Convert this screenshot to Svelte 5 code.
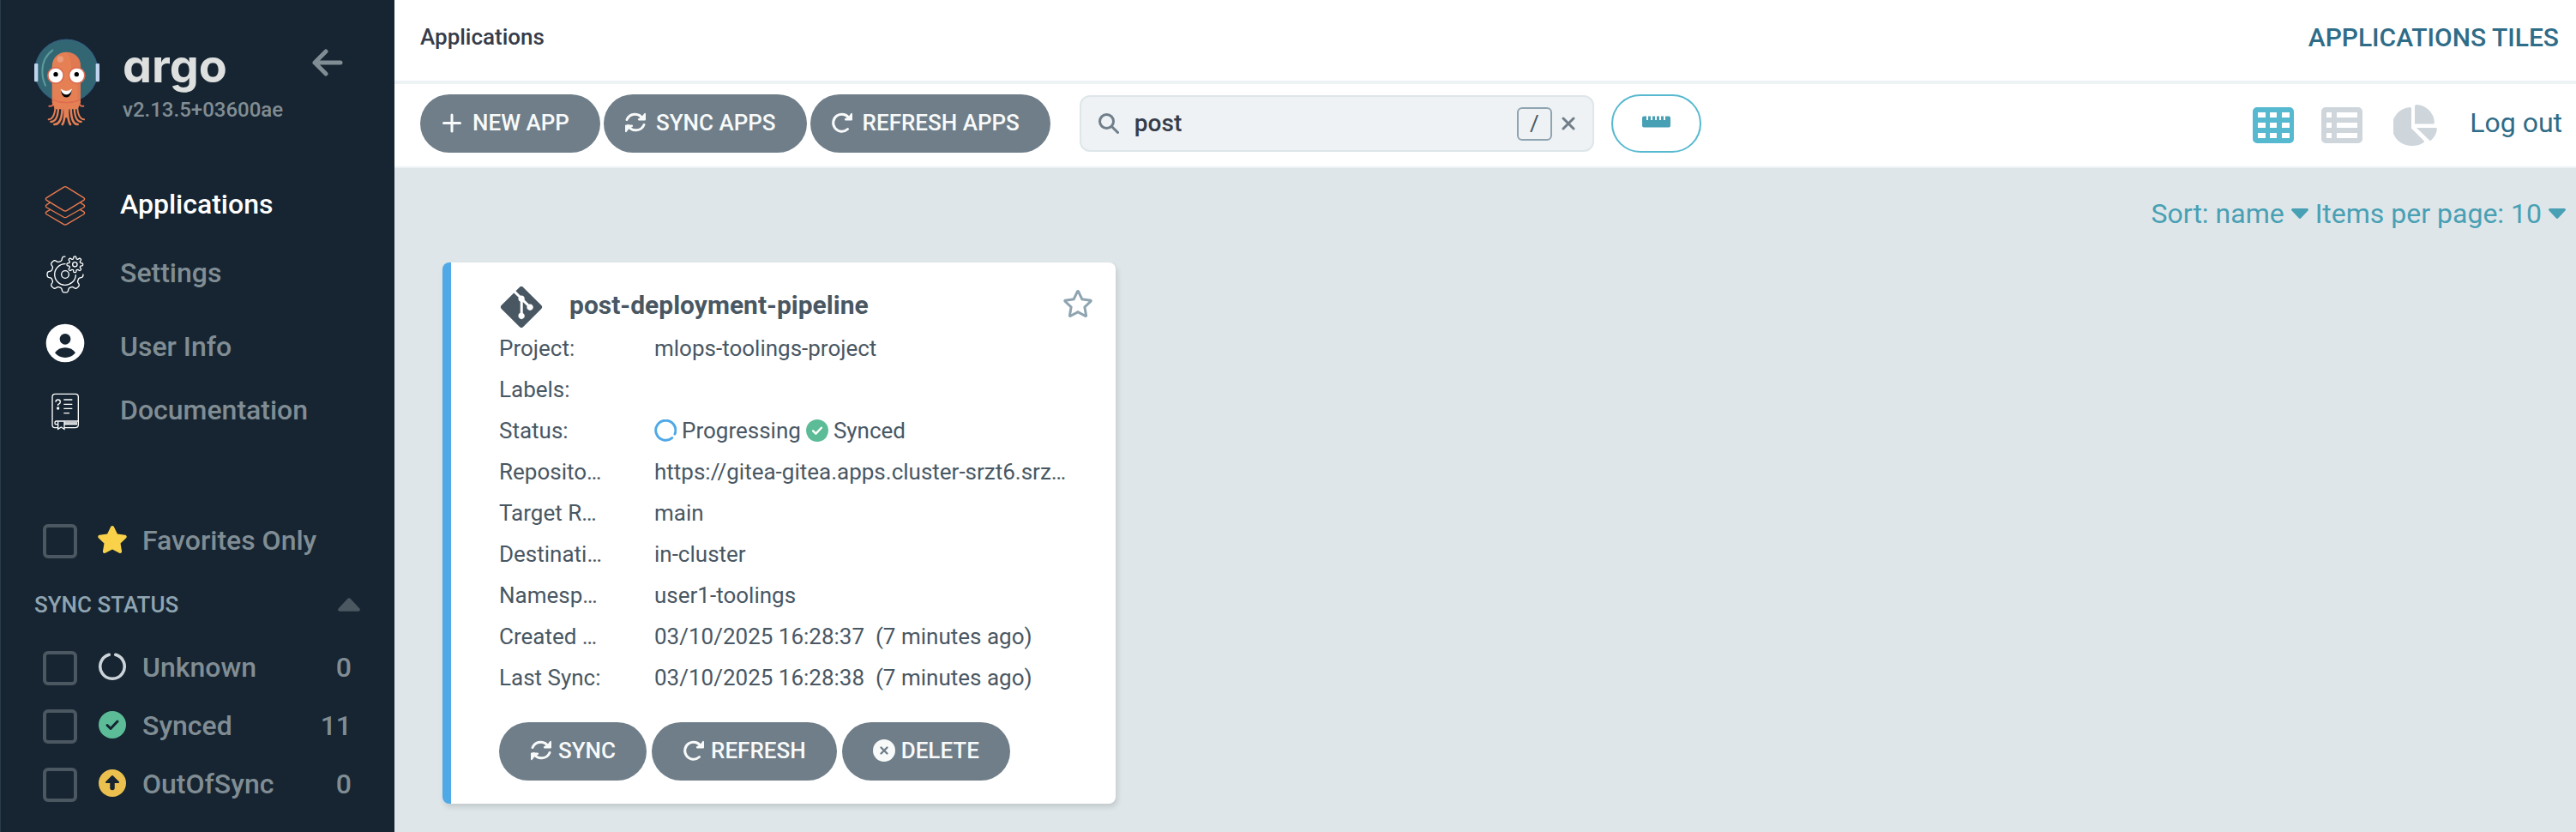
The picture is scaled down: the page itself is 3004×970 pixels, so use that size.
<script>
  const nav = [
    { label: 'Applications', icon: 'stack', active: true },
    { label: 'Settings', icon: 'gear' },
    { label: 'User Info', icon: 'user' },
    { label: 'Documentation', icon: 'book' }
  ];

  const statuses = [
    { label: 'Unknown', icon: 'notch', count: 0 },
    { label: 'Synced', icon: 'check', count: 11 },
    { label: 'OutOfSync', icon: 'up', count: 0 }
  ];

  const details = [
    { label: 'Project:', value: 'mlops-toolings-project' },
    { label: 'Labels:', value: '' },
    { label: 'Status:', status: true },
    { label: 'Reposito…', value: 'https://gitea-gitea.apps.cluster-srzt6.srz…' },
    { label: 'Target R…', value: 'main' },
    { label: 'Destinati…', value: 'in-cluster' },
    { label: 'Namesp…', value: 'user1-toolings' },
    { label: 'Created …', value: '03/10/2025 16:28:37 \u00a0(7 minutes ago)' },
    { label: 'Last Sync:', value: '03/10/2025 16:28:38 \u00a0(7 minutes ago)' }
  ];

  let search = $state('post');

  // Eight-toothed gear outline between two angles, in degrees clockwise from the right.
  function gear(cx, cy, mid, depth, from, to) {
    const points = [];
    for (let a = from; a <= to; a += 2) {
      const t = (a * Math.PI) / 180;
      const r = mid + depth * Math.tanh(2.2 * Math.cos(8 * t));
      points.push(`${(cx + r * Math.cos(t)).toFixed(1)} ${(cy + r * Math.sin(t)).toFixed(1)}`);
    }
    return 'M' + points.join('L');
  }
  const bigGear = gear(228, 390, 56, 7, 0, 270);
  const smallGear = gear(262, 355, 24, 4, 0, 360) + 'Z';
</script>

{#snippet syncIcon()}
  <svg class="btn-icon" viewBox="0 0 26 26" aria-hidden="true">
    <g fill="none" stroke="currentColor" stroke-width="3" stroke-linecap="round" stroke-linejoin="round">
      <path d="M3 9.5A10.3 10.3 0 0 1 21.5 8.5" />
      <path d="M23 15.5A10.3 10.3 0 0 1 4.500 16.5" />
    </g>
    <path d="M23.500 2a1 1 0 0 1 1.500 1v6.500a1 1 0 0 1-1 1h-7a1.300 1.300 0 0 1-.6-2.300l3.800-2z" fill="currentColor" />
    <path d="M2.500 24a1 1 0 0 1-1.500-1v-6.500a1 1 0 0 1 1-1h7a1.300 1.300 0 0 1 .6 2.300l-3.800 2z" fill="currentColor" />
  </svg>
{/snippet}

{#snippet refreshIcon()}
  <svg class="btn-icon" viewBox="0 0 26 26" aria-hidden="true">
    <path d="M19.500 20.500A10 10 0 1 1 21.500 8.500" fill="none" stroke="currentColor" stroke-width="3" stroke-linecap="round" />
    <path d="M23.500 2a1 1 0 0 1 1.500 1v6.500a1 1 0 0 1-1 1h-7a1.300 1.300 0 0 1-.6-2.300l4-2z" fill="currentColor" />
  </svg>
{/snippet}

{#snippet caret(up)}
  <svg class="caret" viewBox="0 0 20 12" aria-hidden="true">
    <path
      d={up
        ? 'M1.500 12h17a1.500 1.500 0 0 0 1-2.500l-8-8.600a2 2 0 0 0-3 0l-8 8.600a1.500 1.500 0 0 0 1 2.500z'
        : 'M1.500 0h17a1.500 1.500 0 0 1 1 2.500l-8 8.600a2 2 0 0 1-3 0l-8-8.600a1.500 1.500 0 0 1 1-2.500z'}
      fill="currentColor"
    />
  </svg>
{/snippet}

{#snippet checkBadge(mark)}
  <svg class="badge" viewBox="0 0 32 32" aria-hidden="true">
    <circle cx="16" cy="16" r="16" fill="#5bbc97" />
    <path d="M10 16.500l4 4 8-8.500" fill="none" stroke={mark} stroke-width="3" stroke-linecap="round" stroke-linejoin="round" />
  </svg>
{/snippet}

<div class="app">
  <aside class="sidebar">
    <div class="brand">
      <svg class="mascot" viewBox="57 45 234 306" role="img" aria-label="Argo">
        <circle cx="172" cy="158" r="110" fill="#336673" stroke="#33608a" stroke-width="3" />
        <path d="M124 86Q88 112 88 160Q88 186 99 209" fill="none" stroke="#64a3a3" stroke-width="6" stroke-linecap="round" opacity=".85" />
        <rect x="60" y="132" width="13" height="64" rx="4" fill="#bfd3ee" />
        <rect x="275" y="132" width="13" height="64" rx="4" fill="#bfd3ee" />
        <g fill="none" stroke="#e57f54" stroke-width="9" stroke-linecap="round">
          <path d="M128 266Q126 284 112 281" stroke="#dd6b50" stroke-width="6" />
          <path d="M216 266Q218 284 232 281" stroke="#dd6b50" stroke-width="6" />
          <path d="M134 270Q134 326 110 328" stroke-width="6" />
          <path d="M144 272Q146 334 118 336" stroke-width="7" />
          <path d="M158 272Q160 344 130 345" stroke-width="8" />
          <path d="M168 270Q168 334 158 345" stroke-width="8" />
          <path d="M176 270Q176 334 186 345" stroke-width="8" />
          <path d="M188 272Q186 344 212 345" stroke-width="8" />
          <path d="M200 272Q198 334 224 336" stroke-width="7" />
          <path d="M210 270Q210 326 234 328" stroke-width="6" />
        </g>
        <path d="M122 143C122 75 222 75 222 143V268L212 292H132L122 268Z" fill="#e57f54" />
        <path d="M162 285H182L178 322H166Z" fill="#e57f54" />
        <path d="M174 93C206 95 222 112 222 143V262L212 266V190Q192 190 190 150Q190 110 174 93Z" fill="#dd7550" opacity=".75" />
        <path d="M122 259Q172 279 222 259" fill="none" stroke="#dd6b50" stroke-width="4" />
        <circle cx="151" cy="117" r="11" fill="#eb9c7c" />
        <circle cx="135" cy="174" r="30" fill="#dd6b50" />
        <circle cx="209" cy="174" r="30" fill="#dd6b50" />
        <circle cx="135" cy="174" r="25" fill="#fff" />
        <circle cx="209" cy="174" r="25" fill="#fff" />
        <circle cx="135" cy="170" r="8" fill="#000" />
        <circle cx="208" cy="170" r="8" fill="#000" />
        <path d="M153 222C154 260 190 260 191 222Q172 244 153 222Z" fill="#000" />
        <path d="M153 222Q158 240 172 240T191 222Q172 236 153 222Z" fill="#fff" stroke="#fff" stroke-width="2" />
      </svg>
      <div class="brand-text">
        <span class="wordmark">argo</span>
        <span class="version">v2.13.5+03600ae</span>
      </div>
      <button class="collapse" aria-label="Collapse sidebar">
        <svg viewBox="0 0 36 32" aria-hidden="true">
          <path d="M33 16H3M16 3L3 16l13 13" fill="none" stroke="currentColor" stroke-width="5" stroke-linecap="round" stroke-linejoin="round" />
        </svg>
      </button>
    </div>

    <nav>
      {#each nav as item}
        <a href="#{item.icon}" class="nav-link {item.icon}" class:active={item.active}>
          {#if item.icon === 'stack'}
            <svg viewBox="156 78 144 144" fill="none" stroke="#ee7a4d" stroke-width="4" stroke-linejoin="round" aria-hidden="true">
              <path d="M222 85Q228 81 234 85L292 121Q300 126 292 131L234 166Q228 170 222 166L164 131Q156 126 164 121Z" />
              <path d="M176 138L164 146Q156 151 164 156L222 189Q228 193 234 189L292 156Q300 151 292 146L280 138" />
              <path d="M176 163L164 170Q156 175 164 180L222 214Q228 218 234 214L292 180Q300 175 292 170L280 163" />
            </svg>
          {:else if item.icon === 'gear'}
            <svg viewBox="156 318 144 144" fill="none" stroke="#fff" stroke-width="4" stroke-linecap="round" stroke-linejoin="round" aria-hidden="true">
              <path d={bigGear} />
              <path d="M228 353A37 37 0 1 0 265 392" />
              <circle cx="228" cy="390" r="13" />
              <path d={smallGear} />
              <circle cx="262" cy="355" r="8" />
            </svg>
          {:else if item.icon === 'user'}
            <svg viewBox="156 553 144 144" aria-hidden="true">
              <circle cx="228" cy="625" r="67" fill="#fff" />
              <circle cx="228" cy="611" r="19" fill="#162531" />
              <path d="M192 659Q204 641 228 641T264 659Q250 676 228 676T192 659Z" fill="#162531" />
            </svg>
          {:else}
            <svg viewBox="159 798 144 144" fill="none" stroke="#fff" stroke-width="4" aria-hidden="true">
              <path d="M206 926H195Q186 926 186 916V818Q186 808 196 808H267Q277 808 277 818V903H200Q195 903 195 909T200 914H206M228 926H266Q277 926 277 916V900M228 914H273M228 909H273" />
              <path d="M206 904V931L217 924L228 931V904" />
              <path d="M226 828H256M226 844H256M226 859H256M226 875H246" />
              <path d="M198 836Q198 828 206 828T214 836Q214 841 206 845V849" />
              <circle cx="206" cy="858" r="3" fill="#fff" />
            </svg>
          {/if}
          <span>{item.label}</span>
        </a>
      {/each}
    </nav>

    <div class="filters">
      <label class="filter">
        <input type="checkbox" />
        <svg class="badge" viewBox="18 0 540 512" aria-hidden="true">
          <path d="M259.300 17.800L194 150.200 47.900 171.500c-26.200 3.800-36.700 36.100-17.700 54.600l105.700 103-25 145.500c-4.500 26.300 23.200 46 46.400 33.700L288 439.600l130.700 68.700c23.200 12.200 50.900-7.400 46.400-33.700l-25-145.500 105.700-103c19-18.500 8.500-50.800-17.700-54.600L382 150.200 316.700 17.800c-11.700-23.600-45.600-23.900-57.400 0z" fill="#f9d24a" />
        </svg>
        <span class="filter-name">Favorites Only</span>
      </label>

      <button class="group-title">SYNC STATUS {@render caret(true)}</button>

      {#each statuses as s}
        <label class="filter">
          <input type="checkbox" />
          {#if s.icon === 'notch'}
            <svg class="badge" viewBox="0 0 32 32" aria-hidden="true">
              <path d="M12.200 2.300A14.200 14.200 0 1 0 19.800 2.300" fill="none" stroke="#ccd4da" stroke-width="3.600" stroke-linecap="round" />
            </svg>
          {:else if s.icon === 'check'}
            {@render checkBadge('#162531')}
          {:else}
            <svg class="badge" viewBox="0 0 32 32" aria-hidden="true">
              <circle cx="16" cy="16" r="16" fill="#ecc04e" />
              <path d="M16 8l7 7H9z" fill="#162531" stroke="#162531" stroke-width="2" stroke-linejoin="round" />
              <path d="M16 13v8.500" stroke="#162531" stroke-width="5.500" stroke-linecap="round" />
            </svg>
          {/if}
          <span class="filter-name">{s.label}</span>
          <span class="count">{s.count}</span>
        </label>
      {/each}
    </div>
  </aside>

  <main>
    <header class="topbar">
      <span class="crumb">Applications</span>
      <span class="view-title">APPLICATIONS TILES</span>
    </header>

    <div class="toolbar">
      <div class="actions">
        <button class="btn">
          <svg class="btn-icon" viewBox="0 0 26 26" aria-hidden="true">
            <path d="M13 4v19M3.500 13.500h19" stroke="currentColor" stroke-width="3" stroke-linecap="round" />
          </svg>
          NEW APP
        </button>
        <button class="btn">{@render syncIcon()} SYNC APPS</button>
        <button class="btn">{@render refreshIcon()} REFRESH APPS</button>
      </div>

      <div class="search">
        <svg class="magnifier" viewBox="0 0 24 24" aria-hidden="true">
          <circle cx="9.500" cy="9.500" r="8" fill="none" stroke="currentColor" stroke-width="3" />
          <path d="M15.500 15.500l7 7" stroke="currentColor" stroke-width="3" stroke-linecap="round" />
        </svg>
        <input type="text" aria-label="Search applications" bind:value={search} />
        <kbd>/</kbd>
        <button class="clear" aria-label="Clear search" onclick={() => (search = '')}>
          <svg viewBox="0 0 16 16" aria-hidden="true">
            <path d="M2 2l12 12M14 2L2 14" stroke="currentColor" stroke-width="3" stroke-linecap="round" />
          </svg>
        </button>
      </div>

      <button class="ruler" aria-label="Health status bar">
        <svg viewBox="0 0 33 14" aria-hidden="true">
          <path d="M2 0.500h3v4.500h2V0.500h3v4.500h2V0.500h3v4.500h2V0.500h3v4.500h2V0.500h3v4.500h2V0.500h4q2 0 2 2v9q0 2-2 2H2q-2 0-2-2V2.500q0-2 2-2z" fill="currentColor" />
        </svg>
      </button>

      <div class="views">
        <button class="view on" aria-label="Tiles">
          <svg viewBox="0 0 48 42" width="48" height="42" aria-hidden="true">
            <path fill-rule="evenodd" fill="currentColor" d="M5 0h38a5 5 0 0 1 5 5v32a5 5 0 0 1-5 5H5a5 5 0 0 1-5-5V5a5 5 0 0 1 5-5zM6 6v6h9V6zM20 6v6h8V6zM34 6v6h9V6zM6 18v6h9v-6zM20 18v6h8v-6zM34 18v6h9v-6zM6 30v6h9v-6zM20 30v6h8v-6zM34 30v6h9v-6z" />
          </svg>
        </button>
        <button class="view" aria-label="List">
          <svg viewBox="0 0 48 42" width="48" height="42" aria-hidden="true">
            <path fill-rule="evenodd" fill="currentColor" d="M5 0h38a5 5 0 0 1 5 5v32a5 5 0 0 1-5 5H5a5 5 0 0 1-5-5V5a5 5 0 0 1 5-5zM6 6v6h6V6zM18 6v6h24V6zM6 18v6h6v-6zM18 18v6h24v-6zM6 30v6h6v-6zM18 30v6h24v-6z" />
          </svg>
        </button>
        <button class="view" aria-label="Summary">
          <svg viewBox="0 0 51 48" width="51" height="48" aria-hidden="true">
            <path fill="currentColor" d="M21 4.500Q21 3 19.500 3A22.500 22.500 0 0 0 22.500 48Q30 48 35.500 44Q36.500 43 35.500 42L21 27.500zM25 1.500Q25 0 27 0A22 22 0 0 1 48 20.500Q48 22.500 46.500 22.500H25zM27 27h22.500Q51 27 51 28.500Q50 36 44 41.500Q43 42.500 42 41.500z" />
          </svg>
        </button>
        <a class="logout" href="#logout">Log out</a>
      </div>
    </div>

    <section class="content">
      <div class="paging">
        <button>Sort: name {@render caret(false)}</button>
        <button>Items per page: 10 {@render caret(false)}</button>
      </div>

      <div class="tiles">
        <article class="tile">
          <div class="tile-head">
            <svg class="git" viewBox="0 32 448 448" aria-hidden="true">
              <path fill="currentColor" d="M439.550 236.050L244 40.450a28.870 28.870 0 0 0-40.810 0l-40.660 40.630 51.520 51.520c27.060-9.140 52.680 16.770 43.390 43.680l49.660 49.660c34.230-11.800 61.180 31 35.470 56.690-26.490 26.490-70.210-2.870-56-37.340L240.220 199v121.850c25.300 12.540 22.260 41.850 9.080 55a34.340 34.340 0 0 1-48.550 0c-17.570-17.600-11.070-46.910 11.250-56v-123c-20.800-8.510-24.600-30.740-18.640-45L142.570 101 8.450 235.140a28.860 28.860 0 0 0 0 40.810l195.610 195.600a28.860 28.860 0 0 0 40.800 0l194.690-194.690a28.860 28.860 0 0 0 0-40.810z" />
            </svg>
            <h2>post-deployment-pipeline</h2>
            <button class="star" aria-label="Add to favorites">
              <svg viewBox="18 0 540 512" aria-hidden="true">
                <path fill="currentColor" d="M528.100 171.500L382 150.200 316.700 17.800c-11.700-23.600-45.600-23.900-57.400 0L194 150.200 47.900 171.500c-26.200 3.800-36.700 36.100-17.700 54.600l105.700 103-25 145.500c-4.500 26.300 23.200 46 46.400 33.700L288 439.600l130.700 68.700c23.200 12.200 50.900-7.400 46.400-33.700l-25-145.500 105.700-103c19-18.500 8.500-50.800-17.700-54.600zM388.600 312.300l23.700 138.400L288 385.400l-124.300 65.300 23.700-138.400-100.600-98 139-20.200 62.200-126 62.200 126 139 20.200-100.600 98z" />
              </svg>
            </button>
          </div>

          <dl>
            {#each details as d}
              <div class="detail">
                <dt>{d.label}</dt>
                <dd>
                  {#if d.status}
                    <span class="status">
                      <svg class="badge" viewBox="0 0 32 32" aria-hidden="true">
                        <path d="M25.500 26.500A14.200 14.200 0 1 1 29.500 21" fill="none" stroke="#4fa9e6" stroke-width="3.600" stroke-linecap="round" />
                      </svg>
                      Progressing
                      {@render checkBadge('#fff')}
                      Synced
                    </span>
                  {:else}
                    {d.value}
                  {/if}
                </dd>
              </div>
            {/each}
          </dl>

          <div class="tile-actions">
            <button class="btn">{@render syncIcon()} SYNC</button>
            <button class="btn">{@render refreshIcon()} REFRESH</button>
            <button class="btn">
              <svg class="btn-icon" viewBox="0 0 26 26" aria-hidden="true">
                <circle cx="13" cy="13" r="13" fill="currentColor" />
                <path d="M9.500 9.500l7 7M16.500 9.500l-7 7" stroke="#6f7e89" stroke-width="2.400" stroke-linecap="round" />
              </svg>
              DELETE
            </button>
          </div>
        </article>
      </div>
    </section>
  </main>
</div>

<style>
  :global(body) {
    margin: 0;
    font-family: Roboto, sans-serif;
    background: #dee6e9;
  }

  .app {
    display: flex;
    min-height: 100vh;
  }

  button {
    border: 0;
    padding: 0;
    background: none;
    font: inherit;
    color: inherit;
    cursor: pointer;
  }

  a {
    text-decoration: none;
  }

  svg {
    display: block;
    flex: none;
  }

  /* Sidebar */
  .sidebar {
    box-sizing: border-box;
    flex: 0 0 460px;
    border-left: 1px solid #2c3b48;
    background: #162531;
    color: #818d94;
    font-size: 32px;
    font-weight: 500;
  }

  .brand {
    display: flex;
    align-items: flex-start;
    padding: 45px 60px 53px 38px;
  }

  .mascot {
    width: 78px;
    height: 102px;
  }

  .brand-text {
    display: flex;
    flex-direction: column;
    flex: 1;
    padding-left: 26px;
  }

  .wordmark {
    font-family: Inter, sans-serif;
    font-feature-settings: 'cv11';
    font-size: 54px;
    font-weight: 700;
    line-height: 64px;
    color: #dee0e0;
  }

  .version {
    font-size: 24px;
    line-height: 38px;
  }

  .collapse {
    padding-top: 12px;
  }

  .collapse svg {
    width: 36px;
    height: 32px;
  }

  .nav-link {
    display: flex;
    align-items: center;
    gap: 40px;
    height: 80px;
    padding-left: 51px;
    color: inherit;
  }

  .nav-link svg {
    width: 48px;
    height: 48px;
  }

  .nav-link span {
    padding-bottom: 4px;
  }

  .nav-link.active {
    color: #fff;
  }

  .nav-link.user span {
    padding: 8px 0 0;
  }

  .filters {
    padding: 77px 50px 20px 49px;
  }

  .filter {
    display: flex;
    align-items: center;
    height: 68px;
  }

  .filter input {
    appearance: none;
    box-sizing: border-box;
    width: 40px;
    height: 40px;
    margin: 0 24px 0 0;
    border: 4px solid #4b5761;
    border-radius: 6px;
  }

  .filter .badge {
    width: 34px;
    height: 32px;
  }

  .filter :global(.badge) {
    margin-bottom: 4px;
  }

  .filter-name {
    flex: 1;
    padding: 0 0 2px 18px;
  }

  .count {
    padding-bottom: 2px;
  }

  .group-title {
    display: flex;
    align-items: center;
    justify-content: space-between;
    box-sizing: border-box;
    width: calc(100% + 20px);
    height: 80px;
    margin: 0 -10px;
    font-size: 26px;
    color: #8fa4b1;
  }

  .group-title .caret {
    width: 26px;
    height: 16px;
    color: #4b5761;
  }

  /* Header */
  main {
    flex: 1;
    min-width: 0;
  }

  .topbar {
    display: flex;
    align-items: center;
    justify-content: space-between;
    height: 86px;
    padding: 0 20px 8px 30px;
    border-bottom: 4px solid #edf2f5;
    background: #fff;
    font-weight: 500;
  }

  .crumb {
    font-size: 26px;
    color: #363c4a;
  }

  .view-title {
    font-size: 30px;
    color: #2f6c88;
  }

  .toolbar {
    display: flex;
    align-items: center;
    height: 68px;
    padding: 12px 16px 16px 30px;
    border-bottom: 2px solid #edf2f5;
    background: #fff;
  }

  .actions {
    display: flex;
    gap: 4px;
  }

  .btn {
    display: flex;
    align-items: center;
    gap: 11px;
    height: 68px;
    padding: 0 36px 2px 24px;
    border-radius: 34px;
    background: #6f7e89;
    color: #f8fafa;
    font-size: 26px;
    font-weight: 500;
    white-space: nowrap;
  }

  .btn-icon {
    width: 26px;
    height: 26px;
  }

  .search {
    display: flex;
    align-items: center;
    box-sizing: border-box;
    flex: 0 1 600px;
    height: 66px;
    margin: 0 20px 0 34px;
    padding: 0 20px;
    border: 2px solid #dee6e9;
    border-radius: 12px;
    background: #eef2f5;
    color: #6f7e89;
  }

  .magnifier {
    width: 24px;
    height: 24px;
  }

  .search input {
    flex: 1;
    min-width: 0;
    padding: 0 0 2px 18px;
    border: 0;
    outline: 0;
    background: none;
    font-family: inherit;
    font-size: 28px;
    font-weight: 500;
    color: #363c4a;
  }

  kbd {
    box-sizing: border-box;
    width: 41px;
    height: 39px;
    border: 2px solid #8fa4b1;
    border-radius: 6px;
    font-family: inherit;
    font-size: 26px;
    line-height: 35px;
    text-align: center;
    color: #495763;
  }

  .clear {
    margin-left: 11px;
  }

  .clear svg {
    width: 16px;
    height: 16px;
  }

  .ruler {
    display: flex;
    align-items: center;
    justify-content: center;
    box-sizing: border-box;
    width: 105px;
    height: 68px;
    padding-bottom: 4px;
    border: 2px solid #56b9d0;
    border-radius: 34px;
    color: #48a0b4;
  }

  .ruler svg {
    width: 33px;
    height: 14px;
  }

  .views {
    display: flex;
    align-items: center;
    margin-left: auto;
  }

  .view {
    margin-right: 32px;
    padding-top: 4px;
    color: #ced6dc;
  }

  .view:nth-of-type(3) {
    margin: 0 38px 0 4px;
  }

  .view.on {
    color: #56b9d0;
  }

  .logout {
    padding-bottom: 2px;
    font-size: 32px;
    color: #2f6c88;
  }

  /* Content */
  .content {
    padding: 34px 56px 32px;
  }

  .paging {
    display: flex;
    justify-content: flex-end;
    gap: 8px;
    margin-right: -44px;
    font-size: 32px;
    line-height: 38px;
    color: #48a0b4;
  }

  .paging button {
    display: flex;
    align-items: center;
    gap: 8px;
  }

  .paging .caret {
    width: 20px;
    height: 12px;
  }

  .tiles {
    display: grid;
    grid-template-columns: repeat(auto-fill, minmax(700px, 1fr));
    gap: 38px;
    margin-top: 38px;
  }

  .tile {
    padding: 28px 27px 27px 56px;
    border-left: 10px solid #4fa9e6;
    border-radius: 8px;
    background: #fff;
    box-shadow: 2px 4px 6px rgba(0, 0, 0, 0.12);
    color: #495763;
    font-size: 26px;
  }

  .tile-head {
    display: flex;
    align-items: center;
  }

  .git {
    width: 52px;
    height: 48px;
  }

  h2 {
    flex: 1;
    margin: 0;
    padding: 0 0 6px 30px;
    font-size: 30px;
    font-weight: 700;
  }

  .star {
    padding-bottom: 8px;
    color: #8fa4b1;
  }

  .star svg {
    width: 34px;
    height: 32px;
  }

  dl {
    margin: 0;
  }

  .detail {
    display: grid;
    grid-template-columns: 181px 1fr;
    line-height: 48px;
    min-height: 48px;
    white-space: nowrap;
  }

  dd {
    margin: 0;
    white-space: pre;
  }

  .status {
    display: flex;
    align-items: center;
    gap: 6px;
    white-space: normal;
  }

  .status .badge {
    width: 26px;
    height: 26px;
  }

  .tile-actions {
    display: flex;
    gap: 6px;
    margin-top: 28px;
  }

  .tile-actions .btn {
    gap: 7px;
    padding: 0 36px 2px;
  }
</style>
